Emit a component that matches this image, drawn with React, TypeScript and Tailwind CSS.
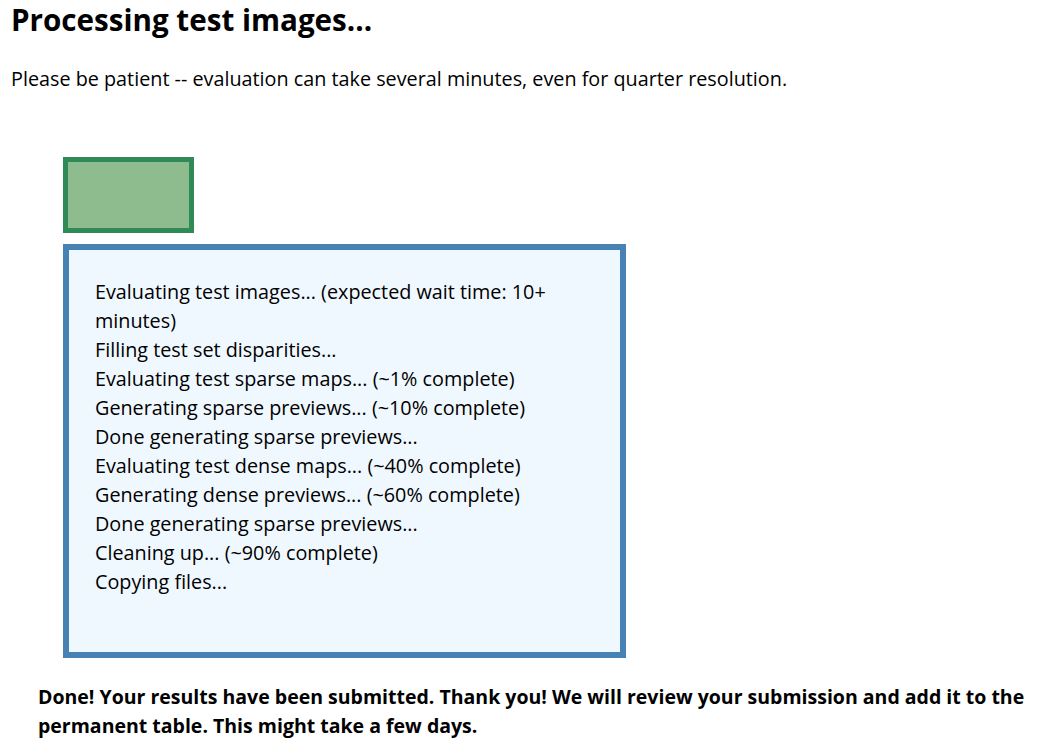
const steps = [
  "Evaluating test images... (expected wait time: 10+ minutes)",
  "Filling test set disparities...",
  "Evaluating test sparse maps... (~1% complete)",
  "Generating sparse previews... (~10% complete)",
  "Done generating sparse previews...",
  "Evaluating test dense maps... (~40% complete)",
  "Generating dense previews... (~60% complete)",
  "Done generating sparse previews...",
  "Cleaning up... (~90% complete)",
  "Copying files...",
];

export default function App() {
  return (
    <div className="min-h-screen bg-white px-[11px] pr-[12px] font-['Open_Sans',sans-serif] text-black">
      <h1 className="pt-[2px] text-[29.6px] font-bold leading-[36px]">Processing test images...</h1>
      <p className="mt-[26px] text-[19.8px] leading-[29px]">
        Please be patient -- evaluation can take several minutes, even for quarter resolution.
      </p>

      <div className="ml-[52px] mt-[64px] flex flex-col gap-[11px]">
        <div className="h-[76px] w-[131px] border-[5px] border-[#2e8b57] bg-[#8fbc8f]" />
        <div className="h-[414px] w-[563px] border-[6px] border-[#4682b4] bg-[#f0f8ff] px-[26px] pt-[27px]">
          {steps.map((s, i) => (
            <div key={i} className="text-[19.8px] leading-[29px]">
              {s}
            </div>
          ))}
        </div>
      </div>

      <p className="ml-[27px] mt-[24px] text-[19.5px] font-bold leading-[29px]">
        Done! Your results have been submitted. Thank you! We will review your submission and add it to the
        permanent table. This might take a few days.
      </p>
    </div>
  );
}
